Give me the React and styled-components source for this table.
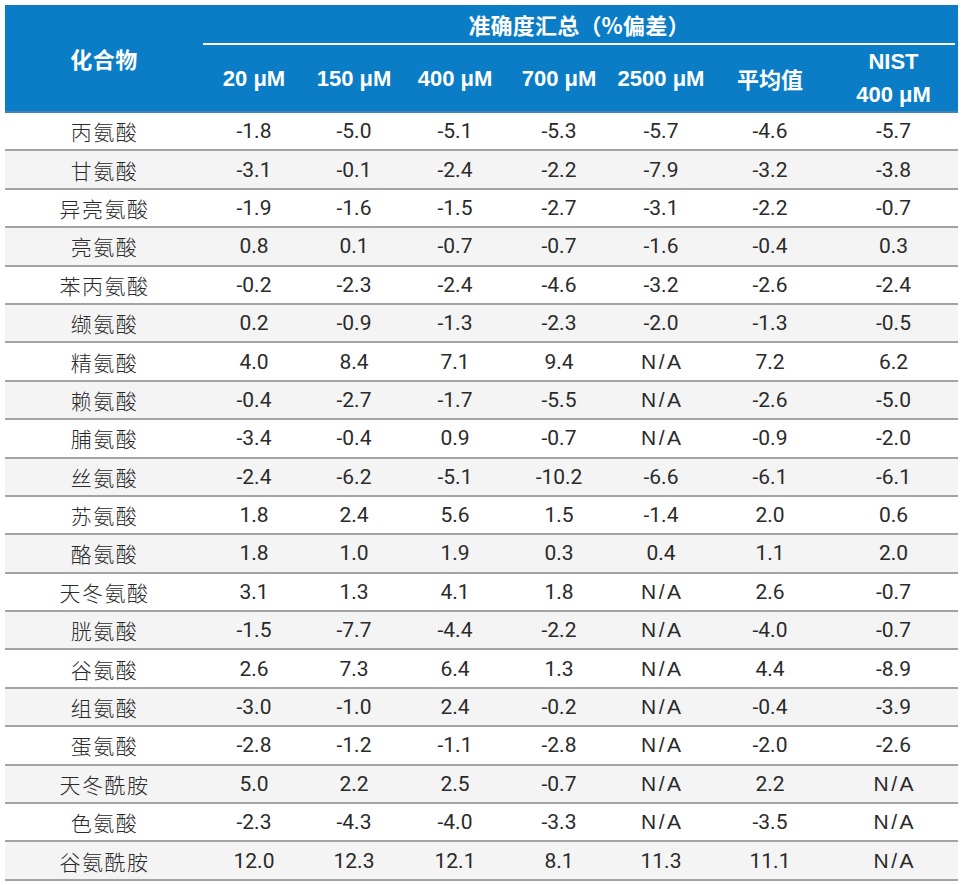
import React from "react";
import styled, { createGlobalStyle } from "styled-components";

const Global = createGlobalStyle`
  html, body { margin: 0; padding: 0; background: #ffffff; }
  body { font-family: "Liberation Sans", "Noto Sans CJK SC", sans-serif; }
`;

const COLS = "198px 102px 98px 104px 104px 100px 118px 129px";

const Page = styled.div`
  padding: 5px 5px 0 5px;
  width: 953px;
`;

const Header = styled.div`
  display: grid;
  grid-template-columns: ${COLS};
  grid-template-rows: 40px 66px;
  background: #0b7dc7;
  border-bottom: 2px solid #3f82b3;
  color: #ffffff;
  font-family: "Liberation Sans", "Noto Sans CJK SC", sans-serif;
  font-weight: 700;
  font-size: 22px;
`;

const CompoundHead = styled.div`
  grid-row: 1 / span 2;
  grid-column: 1;
  display: flex;
  align-items: center;
  justify-content: center;
  font-family: "Noto Sans CJK SC", sans-serif;
  letter-spacing: 0.5px;
`;

const GroupHead = styled.div`
  grid-row: 1;
  grid-column: 2 / -1;
  margin-right: 3px;
  border-bottom: 2px solid #ffffff;
  display: flex;
  align-items: center;
  justify-content: center;
  font-family: "Noto Sans CJK SC", sans-serif;
  letter-spacing: 0.2px;
`;

const SubHead = styled.div`
  grid-row: 2;
  display: flex;
  flex-direction: column;
  align-items: center;
  justify-content: center;
  line-height: 33px;
  font-family: ${(p) => (p.$cjk ? '"Noto Sans CJK SC", sans-serif' : '"Liberation Sans", sans-serif')};
`;

const Row = styled.div`
  display: grid;
  grid-template-columns: ${COLS};
  height: 38.4px;
  box-sizing: border-box;
  border-bottom: 2px solid #a3a3a3;
  background: ${(p) => (p.$shade ? "#f4f4f4" : "#ffffff")};
  color: #2a2a2a;
`;

const NameCell = styled.div`
  display: flex;
  align-items: center;
  justify-content: center;
  font-family: "Noto Sans CJK SC", sans-serif;
  font-weight: 300;
  font-size: 21px;
  letter-spacing: 1.5px;
  padding-left: 1px;
`;

const ValueCell = styled.div`
  display: flex;
  align-items: center;
  justify-content: center;
  font-family: ${(p) => (p.$na ? '"Liberation Sans", sans-serif' : 'Roboto, sans-serif')};
  font-size: 21px;
  letter-spacing: ${(p) => (p.$na ? "2.5px" : "0")};
  padding-left: ${(p) => (p.$na ? "2.5px" : "0")};
  font-weight: 400;
`;

const heads = [
  { t: ["20 μM"] },
  { t: ["150 μM"] },
  { t: ["400 μM"] },
  { t: ["700 μM"] },
  { t: ["2500 μM"] },
  { t: ["平均值"], cjk: true },
  { t: ["NIST", "400 μM"] },
];

const rows = [
  ["丙氨酸", "-1.8", "-5.0", "-5.1", "-5.3", "-5.7", "-4.6", "-5.7"],
  ["甘氨酸", "-3.1", "-0.1", "-2.4", "-2.2", "-7.9", "-3.2", "-3.8"],
  ["异亮氨酸", "-1.9", "-1.6", "-1.5", "-2.7", "-3.1", "-2.2", "-0.7"],
  ["亮氨酸", "0.8", "0.1", "-0.7", "-0.7", "-1.6", "-0.4", "0.3"],
  ["苯丙氨酸", "-0.2", "-2.3", "-2.4", "-4.6", "-3.2", "-2.6", "-2.4"],
  ["缬氨酸", "0.2", "-0.9", "-1.3", "-2.3", "-2.0", "-1.3", "-0.5"],
  ["精氨酸", "4.0", "8.4", "7.1", "9.4", "N/A", "7.2", "6.2"],
  ["赖氨酸", "-0.4", "-2.7", "-1.7", "-5.5", "N/A", "-2.6", "-5.0"],
  ["脯氨酸", "-3.4", "-0.4", "0.9", "-0.7", "N/A", "-0.9", "-2.0"],
  ["丝氨酸", "-2.4", "-6.2", "-5.1", "-10.2", "-6.6", "-6.1", "-6.1"],
  ["苏氨酸", "1.8", "2.4", "5.6", "1.5", "-1.4", "2.0", "0.6"],
  ["酪氨酸", "1.8", "1.0", "1.9", "0.3", "0.4", "1.1", "2.0"],
  ["天冬氨酸", "3.1", "1.3", "4.1", "1.8", "N/A", "2.6", "-0.7"],
  ["胱氨酸", "-1.5", "-7.7", "-4.4", "-2.2", "N/A", "-4.0", "-0.7"],
  ["谷氨酸", "2.6", "7.3", "6.4", "1.3", "N/A", "4.4", "-8.9"],
  ["组氨酸", "-3.0", "-1.0", "2.4", "-0.2", "N/A", "-0.4", "-3.9"],
  ["蛋氨酸", "-2.8", "-1.2", "-1.1", "-2.8", "N/A", "-2.0", "-2.6"],
  ["天冬酰胺", "5.0", "2.2", "2.5", "-0.7", "N/A", "2.2", "N/A"],
  ["色氨酸", "-2.3", "-4.3", "-4.0", "-3.3", "N/A", "-3.5", "N/A"],
  ["谷氨酰胺", "12.0", "12.3", "12.1", "8.1", "11.3", "11.1", "N/A"],
];

export default function App() {
  return (
    <>
      <Global />
      <Page>
        <Header>
          <CompoundHead>化合物</CompoundHead>
          <GroupHead>准确度汇总（%偏差）</GroupHead>
          {heads.map((h, i) => (
            <SubHead key={i} $cjk={h.cjk}>
              {h.t.map((line, j) => (
                <span key={j}>{line}</span>
              ))}
            </SubHead>
          ))}
        </Header>
        {rows.map((r, i) => (
          <Row key={r[0]} $shade={i % 2 === 1}>
            <NameCell>{r[0]}</NameCell>
            {r.slice(1).map((v, j) => (
              <ValueCell key={j} $na={v === "N/A"}>
                {v}
              </ValueCell>
            ))}
          </Row>
        ))}
      </Page>
    </>
  );
}
